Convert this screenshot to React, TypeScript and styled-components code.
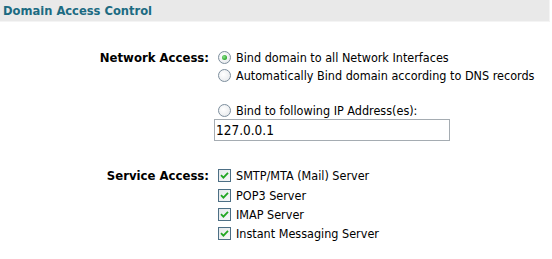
import React from 'react'
import { createGlobalStyle, styled } from 'styled-components'

const GlobalStyle = createGlobalStyle`
  body {
    margin: 0;
    background: #ffffff;
    font-family: Tahoma, "DejaVu Sans Condensed", "DejaVu Sans", sans-serif;
    font-size: 12.5px;
    color: #000000;
  }
`

const Page = styled.div`
  width: 552px;
  height: 259px;
`

const Header = styled.div`
  width: 550px;
  height: 22px;
  background: #e9e9e9;
  border-bottom: 1px solid #f4f4f4;
  border-right: 1px solid #f4f4f4;
  display: flex;
  align-items: center;
  padding-left: 3px;
  box-sizing: border-box;
  font-weight: bold;
  font-size: 12.8px;
  color: #1c6b82;
`

const Form = styled.div`
  display: grid;
  grid-template-columns: 209px 1fr;
  column-gap: 9px;
  row-gap: 25px;
  padding-top: 26px;
`

const Label = styled.div`
  text-align: right;
  font-weight: bold;
  font-size: 13px;
  line-height: 18px;
  padding-top: 1px;
`

const Options = styled.div`
  display: flex;
  flex-direction: column;
`

const Option = styled.label<{ $gap?: number; $h?: number }>`
  display: flex;
  align-items: center;
  gap: 5px;
  height: ${(p) => p.$h ?? 18}px;
  margin-top: ${(p) => p.$gap ?? 0}px;
  white-space: nowrap;
`

const Radio = styled.span<{ $on?: boolean }>`
  width: 11px;
  height: 11px;
  border-radius: 50%;
  border: 1px solid #7d8e9d;
  background: radial-gradient(circle at 40% 40%, #ffffff 0%, #eef0f2 60%, #dfe3e6 100%);
  display: flex;
  align-items: center;
  justify-content: center;
  flex: none;
  &::after {
    content: '';
    display: ${(p) => (p.$on ? 'block' : 'none')};
    width: 5px;
    height: 5px;
    border-radius: 50%;
    background: radial-gradient(circle at 40% 40%, #8ee08e 0%, #2aa82a 70%, #1d8a1d 100%);
  }
`

const Check = styled.span`
  width: 11px;
  height: 11px;
  border: 1px solid #4d6f85;
  background: linear-gradient(135deg, #e4e8ea 0%, #f6f7f8 100%);
  display: flex;
  align-items: center;
  justify-content: center;
  flex: none;
`

const AddressInput = styled.div`
  width: 236px;
  height: 22px;
  box-sizing: border-box;
  border: 1px solid #a5acb2;
  margin-left: -4px;
  padding-left: 1px;
  display: flex;
  align-items: center;
  font-size: 13.5px;
`

const Tick = () => (
  <svg width="9" height="9" viewBox="0 0 9 9">
    <path d="M1 4.2 L3.4 6.6 L8 1.8" fill="none" stroke="#22a622" strokeWidth="1.8" />
  </svg>
)

const services = ['SMTP/MTA (Mail) Server', 'POP3 Server', 'IMAP Server', 'Instant Messaging Server']

export default function App() {
  return (
    <Page>
      <GlobalStyle />
      <Header>Domain Access Control</Header>
      <Form>
        <Label>Network Access:</Label>
        <Options>
          <Option>
            <Radio $on />
            Bind domain to all Network Interfaces
          </Option>
          <Option>
            <Radio />
            Automatically Bind domain according to DNS records
          </Option>
          <Option $gap={17}>
            <Radio />
            Bind to following IP Address(es):
          </Option>
          <AddressInput>127.0.0.1</AddressInput>
        </Options>
        <Label>Service Access:</Label>
        <Options>
          {services.map((s) => (
            <Option key={s} $h={19.4}>
              <Check>
                <Tick />
              </Check>
              {s}
            </Option>
          ))}
        </Options>
      </Form>
    </Page>
  )
}
